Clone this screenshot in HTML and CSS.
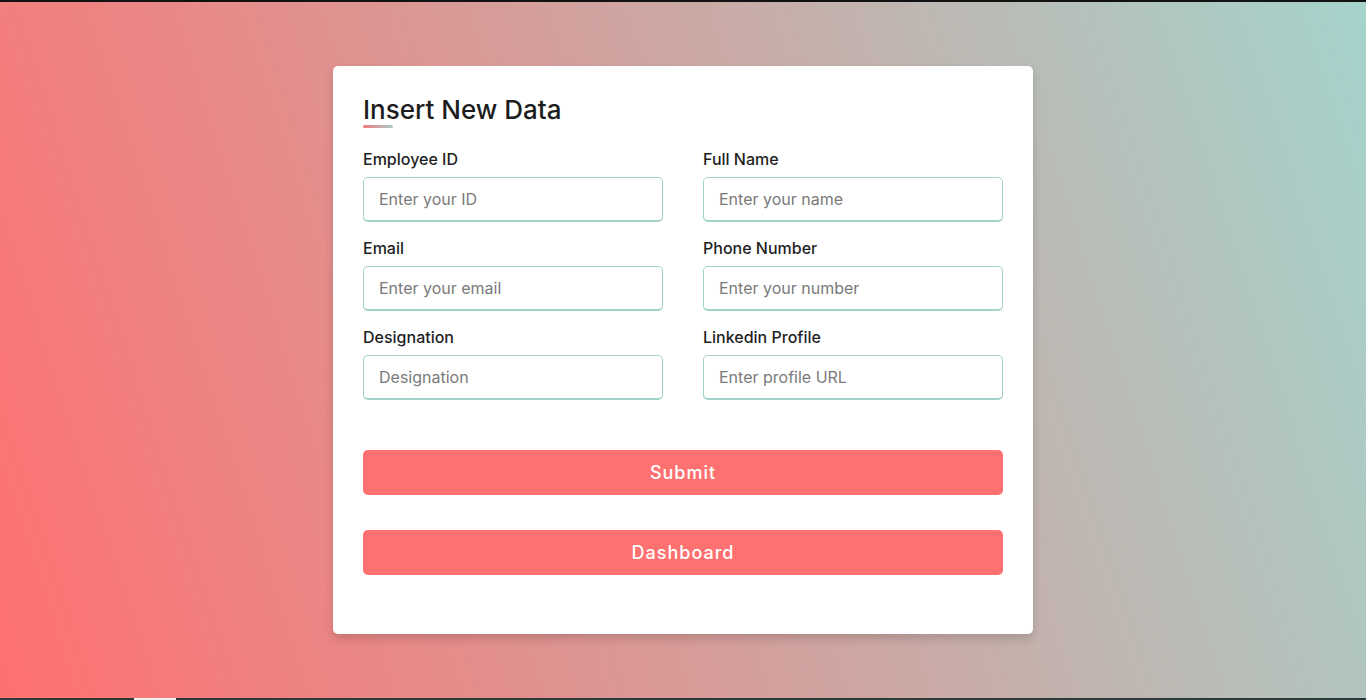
FILE: index.html
```html
<!DOCTYPE html>
<html lang="en">
<head>
<meta charset="utf-8">
<title>Insert New Data</title>
<link rel="stylesheet" href="styles.css">
</head>
<body>
<div class="topbar"></div>
<main class="stage">
  <div class="card">
    <h1 class="title">Insert New Data</h1>
    <form class="form">
      <div class="grid">
        <div class="field">
          <label class="label">Employee ID</label>
          <input class="input" type="text" placeholder="Enter your ID">
        </div>
        <div class="field">
          <label class="label">Full Name</label>
          <input class="input" type="text" placeholder="Enter your name">
        </div>
        <div class="field">
          <label class="label">Email</label>
          <input class="input" type="text" placeholder="Enter your email">
        </div>
        <div class="field">
          <label class="label">Phone Number</label>
          <input class="input" type="text" placeholder="Enter your number">
        </div>
        <div class="field">
          <label class="label">Designation</label>
          <input class="input" type="text" placeholder="Designation">
        </div>
        <div class="field">
          <label class="label">Linkedin Profile</label>
          <input class="input" type="text" placeholder="Enter profile URL">
        </div>
      </div>
      <button class="btn btn-submit" type="button">Submit</button>
      <button class="btn btn-dash" type="button">Dashboard</button>
    </form>
  </div>
</main>
<div class="bottombar"><span class="tab"></span></div>
</body>
</html>
```

FILE: styles.css
```css
* { box-sizing: border-box; }

html, body { height: 100%; }

body {
  margin: 0;
  display: flex;
  flex-direction: column;
  font-family: "Inter", "Open Sans", sans-serif;
  color: #1f1f1f;
}

.topbar {
  height: 2px;
  background: #121212;
  flex: none;
}

.bottombar {
  height: 2px;
  background: #2b3a3a;
  flex: none;
  display: flex;
  padding-left: 134px;
}

.tab {
  width: 42px;
  height: 2px;
  background: #f2f2f2;
}

.stage {
  flex: 1;
  display: flex;
  align-items: center;
  justify-content: center;
  background: linear-gradient(72deg, #ff7070 0%, #a5d3cc 100%);
}

.card {
  width: 700px;
  background: #fff;
  border-radius: 5px;
  padding: 25px 30px 59px;
  box-shadow: 0 5px 10px rgba(0, 0, 0, 0.15);
}

.title {
  margin: 0;
  padding-top: 3px;
  font-size: 26px;
  font-weight: 500;
  line-height: 31px;
  color: #1d1d1d;
}

.title::after {
  content: "";
  display: block;
  width: 30px;
  height: 3px;
  border-radius: 2px;
  background: linear-gradient(90deg, #f07c7c, #a9cdc6);
}

.form {
  margin-top: 19px;
  display: flex;
  flex-direction: column;
}

.grid {
  display: grid;
  grid-template-columns: 300px 300px;
  column-gap: 40px;
  row-gap: 14px;
}

.field {
  display: flex;
  flex-direction: column;
}

.label {
  font-size: 16px;
  font-weight: 500;
  line-height: 24px;
  margin-bottom: 6px;
  color: #1f1f1f;
}

.input {
  height: 45px;
  width: 100%;
  border: 1px solid #a2d2c9;
  border-bottom-width: 2px;
  border-radius: 5px;
  padding: 0 15px;
  font-family: inherit;
  font-size: 16px;
  color: #333;
  outline: none;
  background: #fff;
}

.input::placeholder {
  color: #7a7a7a;
}

.btn {
  height: 45px;
  width: 100%;
  border: none;
  border-radius: 5px;
  background: #ff7171;
  color: #fff;
  font-family: inherit;
  font-size: 18px;
  font-weight: 500;
  letter-spacing: 1px;
  cursor: pointer;
}

.btn-submit {
  margin-top: 50px;
}

.btn-dash {
  margin-top: 35px;
}
```
